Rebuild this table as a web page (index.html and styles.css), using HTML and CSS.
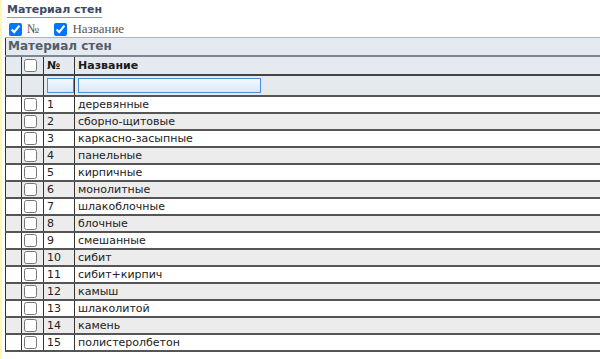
FILE: index.html
```html
<!DOCTYPE html>
<html>
<head>
<meta charset="utf-8">
<link rel="stylesheet" href="styles.css">
</head>
<body>
<div class="page">
  <div class="title-wrap"><span class="title">Материал стен</span></div>
  <div class="toggles">
    <label class="toggle"><input type="checkbox" checked> №</label>
    <label class="toggle"><input type="checkbox" checked> Название</label>
  </div>
  <table class="grid">
    <colgroup>
      <col class="c0"><col class="c1"><col class="c2"><col class="c3">
    </colgroup>
    <thead>
      <tr class="cap"><td colspan="4">Материал стен</td></tr>
      <tr class="head">
        <td></td>
        <td class="chk"><input type="checkbox"></td>
        <td>№</td>
        <td>Название</td>
      </tr>
      <tr class="filter">
        <td></td>
        <td></td>
        <td><input class="f-num" type="text"></td>
        <td><input class="f-name" type="text"></td>
      </tr>
    </thead>
    <tbody>
      <tr><td></td><td class="chk"><input type="checkbox"></td><td>1</td><td>деревянные</td></tr>
      <tr><td></td><td class="chk"><input type="checkbox"></td><td>2</td><td>сборно-щитовые</td></tr>
      <tr><td></td><td class="chk"><input type="checkbox"></td><td>3</td><td>каркасно-засыпные</td></tr>
      <tr><td></td><td class="chk"><input type="checkbox"></td><td>4</td><td>панельные</td></tr>
      <tr><td></td><td class="chk"><input type="checkbox"></td><td>5</td><td>кирпичные</td></tr>
      <tr><td></td><td class="chk"><input type="checkbox"></td><td>6</td><td>монолитные</td></tr>
      <tr><td></td><td class="chk"><input type="checkbox"></td><td>7</td><td>шлакоблочные</td></tr>
      <tr><td></td><td class="chk"><input type="checkbox"></td><td>8</td><td>блочные</td></tr>
      <tr><td></td><td class="chk"><input type="checkbox"></td><td>9</td><td>смешанные</td></tr>
      <tr><td></td><td class="chk"><input type="checkbox"></td><td>10</td><td>сибит</td></tr>
      <tr><td></td><td class="chk"><input type="checkbox"></td><td>11</td><td>сибит+кирпич</td></tr>
      <tr><td></td><td class="chk"><input type="checkbox"></td><td>12</td><td>камыш</td></tr>
      <tr><td></td><td class="chk"><input type="checkbox"></td><td>13</td><td>шлаколитой</td></tr>
      <tr><td></td><td class="chk"><input type="checkbox"></td><td>14</td><td>камень</td></tr>
      <tr><td></td><td class="chk"><input type="checkbox"></td><td>15</td><td>полистеролбетон</td></tr>
    </tbody>
  </table>
</div>
</body>
</html>
```
FILE: styles.css
```css
html, body {
  margin: 0;
  padding: 0;
  overflow: hidden;
  background: #fff;
}
body {
  font-family: "DejaVu Sans", Verdana, sans-serif;
  font-size: 11px;
  color: #222;
}
.page {
  border-left: 2px solid #fff7b8;
  padding: 3px 0 0 3px;
  min-height: 359px;
  box-sizing: border-box;
}
.title-wrap {
  padding-left: 2px;
  height: 16px;
}
.title {
  display: inline-block;
  font-weight: bold;
  font-size: 11px;
  color: #3c4a63;
  border-bottom: 1px solid #8d9bb0;
  padding-bottom: 1px;
  line-height: 13px;
}
.toggles {
  display: flex;
  gap: 15px;
  padding: 2px 0 0 4px;
  height: 16px;
}
.toggle {
  display: flex;
  align-items: center;
  gap: 5px;
  font-family: "Liberation Serif", "Times New Roman", serif;
  font-size: 13px;
  color: #555;
}
.toggle input {
  margin: 0;
  width: 13px;
  height: 13px;
}
.grid {
  border-collapse: collapse;
  table-layout: fixed;
  width: 620px;
  border-left: 1px solid #333;
}
.c0 { width: 16px; }
.c1 { width: 22px; }
.c2 { width: 31px; }
.grid td {
  padding: 0 0 0 3px;
  border-right: 1px solid #333;
  border-bottom: 2px solid #555;
  height: 15px;
  line-height: 15px;
  white-space: nowrap;
  overflow: hidden;
}
.grid tbody tr:nth-child(even) td {
  background: #ececec;
}
.grid .chk {
  padding-left: 2px;
}
.grid .chk input {
  margin: 1px 0 0 0;
  width: 13px;
  height: 13px;
  vertical-align: top;
}
.grid thead td {
  background: #e4eaf0;
}
.grid .cap td {
  border-top: 1px solid #a9b5c3;
  border-right: none;
  border-bottom: 2px solid #7b8794;
  font-weight: bold;
  font-size: 12px;
  color: #545e6a;
  height: 17px;
  line-height: 17px;
  padding-left: 2px;
}
.grid .head td {
  font-weight: bold;
  color: #1a1a1a;
  height: 17px;
  line-height: 17px;
  border-bottom: 2px solid #444;
}
.grid .head .chk input {
  margin-top: 2px;
}
.grid .filter td {
  height: 18px;
  padding-top: 1px;
  padding-bottom: 0;
  vertical-align: top;
}
.grid .filter input {
  height: 15px;
  box-sizing: border-box;
  border: 1px solid #4a8fd6;
  background: linear-gradient(#f4f9ff, #d8e8fa);
  padding: 0;
  margin: 1px 0 0 0;
  display: block;
}
.f-num { width: 27px; }
.f-name { width: 183px; }
```
